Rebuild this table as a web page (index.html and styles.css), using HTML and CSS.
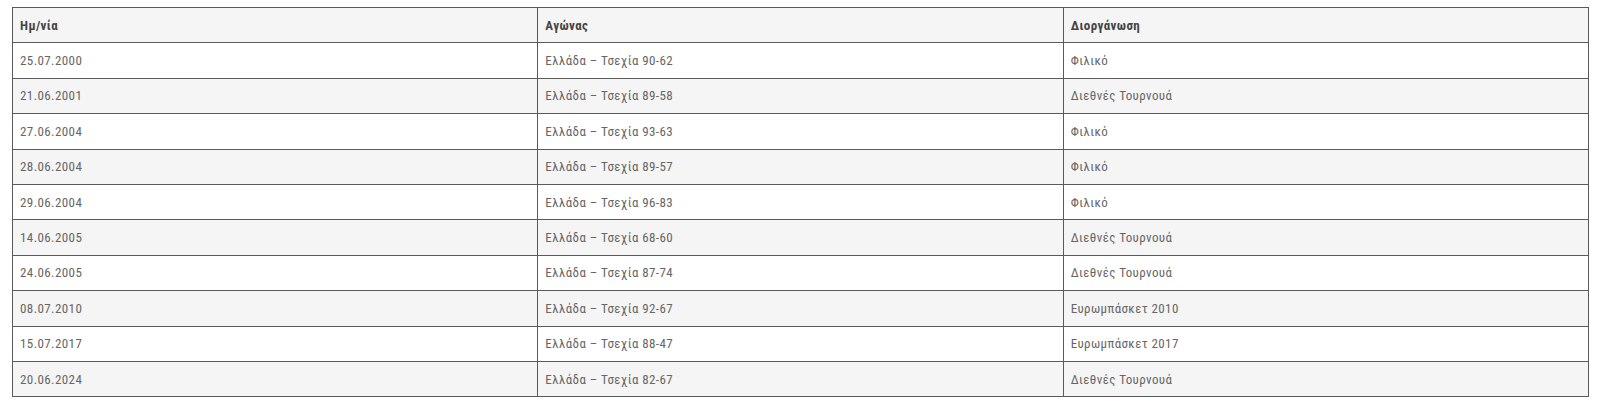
FILE: index.html
```html
<!DOCTYPE html>
<html lang="el">
<head>
    <meta charset="UTF-8">
    <meta name="viewport" content="width=device-width, initial-scale=1.0">
    <title>Ελλάδα – Τσεχία</title>
    <link rel="stylesheet" href="styles.css">
</head>
<body>
    <div class="wrap">
        <table class="games">
            <thead>
                <tr>
                    <th>Ημ/νία</th>
                    <th>Αγώνας</th>
                    <th>Διοργάνωση</th>
                </tr>
            </thead>
            <tbody>
                <tr><td>25.07.2000</td><td>Ελλάδα – Τσεχία 90-62</td><td>Φιλικό</td></tr>
                <tr><td>21.06.2001</td><td>Ελλάδα – Τσεχία 89-58</td><td>Διεθνές Τουρνουά</td></tr>
                <tr><td>27.06.2004</td><td>Ελλάδα – Τσεχία 93-63</td><td>Φιλικό</td></tr>
                <tr><td>28.06.2004</td><td>Ελλάδα – Τσεχία 89-57</td><td>Φιλικό</td></tr>
                <tr><td>29.06.2004</td><td>Ελλάδα – Τσεχία 96-83</td><td>Φιλικό</td></tr>
                <tr><td>14.06.2005</td><td>Ελλάδα – Τσεχία 68-60</td><td>Διεθνές Τουρνουά</td></tr>
                <tr><td>24.06.2005</td><td>Ελλάδα – Τσεχία 87-74</td><td>Διεθνές Τουρνουά</td></tr>
                <tr><td>08.07.2010</td><td>Ελλάδα – Τσεχία 92-67</td><td>Ευρωμπάσκετ 2010</td></tr>
                <tr><td>15.07.2017</td><td>Ελλάδα – Τσεχία 88-47</td><td>Ευρωμπάσκετ 2017</td></tr>
                <tr><td>20.06.2024</td><td>Ελλάδα – Τσεχία 82-67</td><td>Διεθνές Τουρνουά</td></tr>
            </tbody>
        </table>
    </div>
</body>
</html>
```

FILE: styles.css
```css
*{
    margin: 0;
    padding: 0;
}
body{
    background: #fff;
    font-family: "Roboto Condensed", "Liberation Sans Narrow", Roboto, sans-serif;
    font-stretch: condensed;
}
.wrap{
    padding: 7px 11px 0 12px;
}
.games{
    width: 100%;
    border-collapse: collapse;
    table-layout: fixed;
    border: 1px solid #8a8a8a;
}
.games th,
.games td{
    text-align: left;
    font-size: 13px;
    letter-spacing: 0.4px;
    line-height: 15.4px;
    padding: 9.5px 7px;
    border: 1px solid #5a5a5a;
    color: #666;
}
.games th{
    font-weight: bold;
    color: #444;
    background: #f5f5f5;
}
.games tbody tr:nth-child(even) td{
    background: #f5f5f5;
}
```
